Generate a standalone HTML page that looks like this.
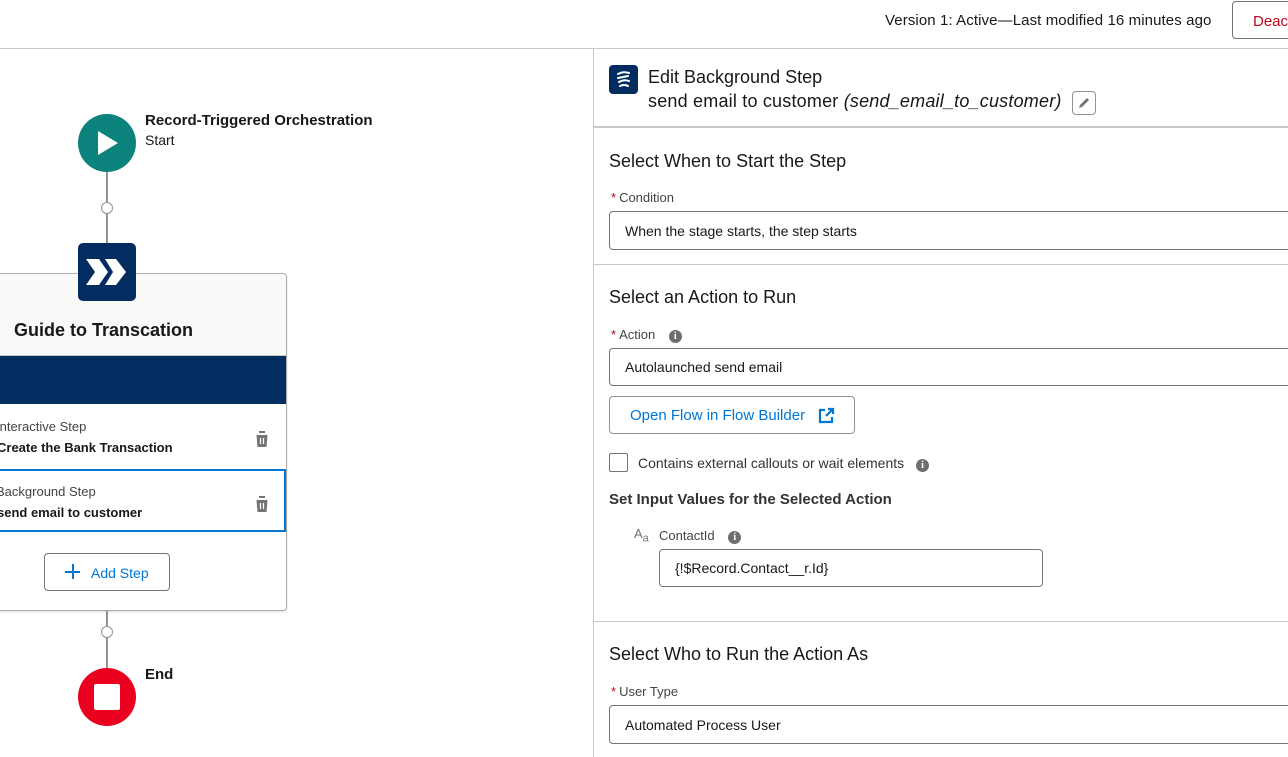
<!DOCTYPE html>
<html><head><meta charset="utf-8"><style>
*{box-sizing:border-box;margin:0;padding:0}
body{width:1288px;height:757px;overflow:hidden;background:#fff;font-family:"Liberation Sans",sans-serif;color:#181818;position:relative}
.a{position:absolute;white-space:nowrap}
.inp{position:absolute;border:1px solid #747474;border-radius:4px;background:#fff;font-size:14px;padding-left:15px;display:flex;align-items:center}
.lbl{font-size:13px;color:#444}
.req{color:#ba0517;margin-right:3px}
.h{font-size:18px;color:#181818}
.info{display:inline-block;width:13px;height:13px;border-radius:50%;background:#706e6b;color:#fff;font-size:10px;font-weight:bold;text-align:center;line-height:13px;font-family:"Liberation Serif",serif}
</style></head><body>
<div class="a" style="left:0;top:48px;width:1288px;height:1px;background:#c9c9c9"></div>
<div class="a" style="left:885px;top:12px;font-size:15px;color:#181818;letter-spacing:0.1px">Version 1: Active—Last modified 16 minutes ago</div>
<div class="a" style="left:1232px;top:1px;width:70px;height:38px;border:1px solid #747474;border-radius:4px;color:#ba0517;font-size:15px;padding:11px 0 0 20px">Deactivate</div>

<div class="a" style="left:78px;top:114px;width:58px;height:58px;border-radius:50%;background:#0b827c"></div>
<svg class="a" style="left:96px;top:129px" width="24" height="28"><path d="M2 2 L22 14 L2 26Z" fill="#fff"/></svg>
<div class="a" style="left:145px;top:112px;font-size:15px;font-weight:bold">Record-Triggered Orchestration</div>
<div class="a" style="left:145px;top:132px;font-size:14px">Start</div>
<div class="a" style="left:106px;top:172px;width:2px;height:30px;background:#939393"></div>
<div class="a" style="left:101px;top:202px;width:12px;height:12px;border-radius:50%;border:1px solid #939393;background:#fff"></div>
<div class="a" style="left:106px;top:214px;width:2px;height:30px;background:#939393"></div>

<div class="a" style="left:-10px;top:273px;width:297px;height:338px;border:1px solid #adadad;border-radius:4px;background:#fff;box-shadow:0 1px 2px rgba(0,0,0,.15);overflow:hidden">
 <div style="height:82px;background:#f9f9f8;border-bottom:1px solid #c9c9c9"></div>
 <div style="height:48px;background:#032d60"></div>
</div>
<div class="a" style="left:14px;top:320px;font-size:18px;font-weight:bold">Guide to Transcation</div>
<div class="a" style="left:78px;top:243px;width:58px;height:58px;border-radius:5px;background:#032d60"></div>
<svg class="a" style="left:78px;top:243px" width="58" height="58"><path d="M8 16 H21 L30 29 L21 42 H8 L17 29Z M27 16 H38 L48 29 L38 42 H27 L35 29Z" fill="#fff"/></svg>

<div class="a" style="left:-4px;top:419px;font-size:13px;color:#444">Interactive Step</div>
<div class="a" style="left:-3px;top:440px;font-size:13px;font-weight:bold">Create the Bank Transaction</div>
<div class="a" style="left:-10px;top:469px;width:296px;height:63px;border:2px solid #0176d3"></div>
<div class="a" style="left:-4px;top:484px;font-size:13px;color:#444">Background Step</div>
<div class="a" style="left:-3px;top:505px;font-size:13px;font-weight:bold">send email to customer</div>
<svg class="a" style="left:254px;top:430px" width="16" height="18"><path d="M1 3H15M5 3V1H11V3M2.5 5H13.5L12.5 17H3.5Z" fill="#747474"/><path d="M6.5 8V14M9.5 8V14" stroke="#fff" stroke-width="1.2"/></svg>
<svg class="a" style="left:254px;top:495px" width="16" height="18"><path d="M1 3H15M5 3V1H11V3M2.5 5H13.5L12.5 17H3.5Z" fill="#747474"/><path d="M6.5 8V14M9.5 8V14" stroke="#fff" stroke-width="1.2"/></svg>
<div class="a" style="left:44px;top:553px;width:126px;height:38px;border:1px solid #747474;border-radius:4px;color:#0176d3;font-size:14px;padding:11px 0 0 46px">Add Step</div>
<div class="a" style="left:65px;top:571px;width:15px;height:2px;background:#0176d3"></div>
<div class="a" style="left:71.5px;top:564px;width:2px;height:15px;background:#0176d3"></div>

<div class="a" style="left:106px;top:611px;width:2px;height:15px;background:#939393"></div>
<div class="a" style="left:101px;top:626px;width:12px;height:12px;border-radius:50%;border:1px solid #939393;background:#fff"></div>
<div class="a" style="left:106px;top:638px;width:2px;height:30px;background:#939393"></div>
<div class="a" style="left:78px;top:668px;width:58px;height:58px;border-radius:50%;background:#ea001e"></div>
<div class="a" style="left:94px;top:684px;width:26px;height:26px;border-radius:2px;background:#fff"></div>
<div class="a" style="left:145px;top:666px;font-size:15px;font-weight:bold">End</div>

<div class="a" style="left:593px;top:49px;width:1px;height:708px;background:#c9c9c9"></div>
<div class="a" style="left:609px;top:65px;width:29px;height:29px;border-radius:4px;background:#032d60"></div>
<svg class="a" style="left:609px;top:65px" width="29" height="29"><path d="M9 9 Q14 6 20 8 M9 13 L19 11 M10 17 Q15 14 20 16 M11 21 Q15 19 19 21" stroke="#fff" stroke-width="2" fill="none" stroke-linecap="round"/></svg>
<div class="a" style="left:648px;top:67px;font-size:18px">Edit Background Step</div>
<div class="a" style="left:648px;top:91px;font-size:18px;letter-spacing:0.2px">send email to customer <i>(send_email_to_customer)</i></div>
<div class="a" style="left:1072px;top:91px;width:24px;height:24px;border:1px solid #939393;border-radius:4px"></div>
<svg class="a" style="left:1077px;top:96px" width="14" height="14"><path d="M2 12 L3 9 L10 2 L12 4 L5 11Z" fill="#747474"/></svg>
<div class="a" style="left:594px;top:126px;width:694px;height:2px;background:#c9c9c9"></div>

<div class="a h" style="left:609px;top:151px">Select When to Start the Step</div>
<div class="a lbl" style="left:611px;top:190px"><span class="req">*</span>Condition</div>
<div class="inp" style="left:609px;top:211px;width:700px;height:39px">When the stage starts, the step starts</div>
<div class="a" style="left:594px;top:264px;width:694px;height:1px;background:#c9c9c9"></div>

<div class="a h" style="left:609px;top:287px">Select an Action to Run</div>
<div class="a lbl" style="left:611px;top:327px"><span class="req">*</span>Action <span class="info" style="margin-left:10px">i</span></div>
<div class="inp" style="left:609px;top:348px;width:700px;height:38px">Autolaunched send email</div>
<div class="a" style="left:609px;top:396px;width:246px;height:38px;border:1px solid #939393;border-radius:4px;color:#0176d3;font-size:15px;padding:10px 0 0 20px">Open Flow in Flow Builder</div>
<svg class="a" style="left:818px;top:407px" width="17" height="17"><path d="M7 3H2V15H14V10" stroke="#0176d3" stroke-width="2.2" fill="none"/><path d="M8 9L15 2M10 2H15V7" stroke="#0176d3" stroke-width="2.2" fill="none"/></svg>
<div class="a" style="left:609px;top:453px;width:19px;height:19px;border:1px solid #747474;border-radius:2px"></div>
<div class="a" style="left:638px;top:455px;font-size:14px;color:#333">Contains external callouts or wait elements <span class="info" style="margin-left:8px">i</span></div>
<div class="a" style="left:609px;top:491px;font-size:15px;font-weight:bold;color:#333">Set Input Values for the Selected Action</div>
<div class="a" style="left:634px;top:526px;font-size:13px;color:#747474">A<sub style="font-size:11px">a</sub></div>
<div class="a lbl" style="left:659px;top:528px">ContactId <span class="info" style="margin-left:10px">i</span></div>
<div class="inp" style="left:659px;top:549px;width:384px;height:38px">{!$Record.Contact__r.Id}</div>
<div class="a" style="left:594px;top:621px;width:694px;height:1px;background:#c9c9c9"></div>

<div class="a h" style="left:609px;top:644px">Select Who to Run the Action As</div>
<div class="a lbl" style="left:611px;top:684px"><span class="req">*</span>User Type</div>
<div class="inp" style="left:609px;top:705px;width:700px;height:39px">Automated Process User</div>
</body></html>
